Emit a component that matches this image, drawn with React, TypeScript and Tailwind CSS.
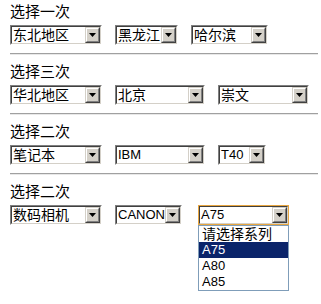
import React from "react";

type Sel = { text: string; w: number; ml: number; latin?: boolean };

type Group = { title: string; selects: Sel[] };

const GROUPS: Group[] = [
  {
    title: "选择一次",
    selects: [
      { text: "东北地区", w: 92, ml: 0 },
      { text: "黑龙江", w: 63, ml: 13 },
      { text: "哈尔滨", w: 77, ml: 13 },
    ],
  },
  {
    title: "选择三次",
    selects: [
      { text: "华北地区", w: 92, ml: 0 },
      { text: "北京", w: 90, ml: 13 },
      { text: "崇文", w: 91, ml: 13 },
    ],
  },
  {
    title: "选择二次",
    selects: [
      { text: "笔记本", w: 92, ml: 0 },
      { text: "IBM", w: 90, ml: 13, latin: true },
      { text: "T40", w: 48, ml: 13, latin: true },
    ],
  },
];

const FONT = "font-['Liberation_Sans','Noto_Sans_CJK_SC',sans-serif]";

function Arrow() {
  return (
    <div className="h-full w-[15px] shrink-0 border border-t-[#d4d0c8] border-l-[#d4d0c8] border-r-[#404040] border-b-[#404040]">
      <div className="flex h-full w-full items-center justify-center border border-t-white border-l-white border-r-[#808080] border-b-[#808080] bg-[#d4d0c8]">
        <svg width="7" height="4" viewBox="0 0 7 4">
          <path d="M0 0H7L3.5 4Z" fill="#000" />
        </svg>
      </div>
    </div>
  );
}

function Select({ sel, focused }: { sel: Sel; focused?: boolean }) {
  return (
    <div
      className={
        "h-[20px] shrink-0 border " +
        (focused
          ? "border-[#e8a640]"
          : "border-t-[#808080] border-l-[#808080] border-r-white border-b-white")
      }
      style={{ width: sel.w, marginLeft: sel.ml }}
    >
      <div className="flex h-full w-full border border-t-[#404040] border-l-[#404040] border-r-[#d4d0c8] border-b-[#d4d0c8] bg-white">
        <div
          className={
            "flex-1 overflow-hidden whitespace-nowrap pl-[1px] leading-[16px] text-black " +
            (sel.latin ? "text-[13px]" : "text-[14px]")
          }
        >
          {sel.text}
        </div>
        <Arrow />
      </div>
    </div>
  );
}

function Title({ children }: { children: React.ReactNode }) {
  return <div className="h-[22px] text-[15px] leading-[22px] text-black">{children}</div>;
}

function Rule() {
  return <div className="mt-[8px] mb-[6px] mr-[3px] border-t border-b border-t-[#a0a0a0] border-b-[#e8e8e8]" />;
}

export default function App() {
  const options = ["请选择系列", "A75", "A80", "A85"];
  return (
    <div className={"h-[304px] w-[321px] bg-white pl-[10px] pt-[1px] " + FONT}>
      {GROUPS.map((g) => (
        <div key={g.title}>
          <Title>{g.title}</Title>
          <div className="mt-[2px] flex">
            {g.selects.map((s) => (
              <Select key={s.text} sel={s} />
            ))}
          </div>
          <Rule />
        </div>
      ))}
      <div>
        <Title>选择二次</Title>
        <div className="mt-[2px] flex">
          <Select sel={{ text: "数码相机", w: 92, ml: 0 }} />
          <Select sel={{ text: "CANON", w: 67, ml: 13, latin: true }} />
          <div className="relative ml-[16px]">
            <Select sel={{ text: "A75", w: 91, ml: 0, latin: true }} focused />
            <div className="absolute left-0 top-[20px] w-[91px] border border-[#7f9db9] bg-white">
              {options.map((o, i) => (
                <div
                  key={o}
                  className={
                    "h-[16px] whitespace-nowrap pl-[3px] leading-[16px] " +
                    (i === 0 ? "text-[14px] " : "text-[13px] ") +
                    (o === "A75" ? "bg-[#0a246a] text-white" : "text-black")
                  }
                >
                  {o}
                </div>
              ))}
            </div>
          </div>
        </div>
      </div>
    </div>
  );
}
